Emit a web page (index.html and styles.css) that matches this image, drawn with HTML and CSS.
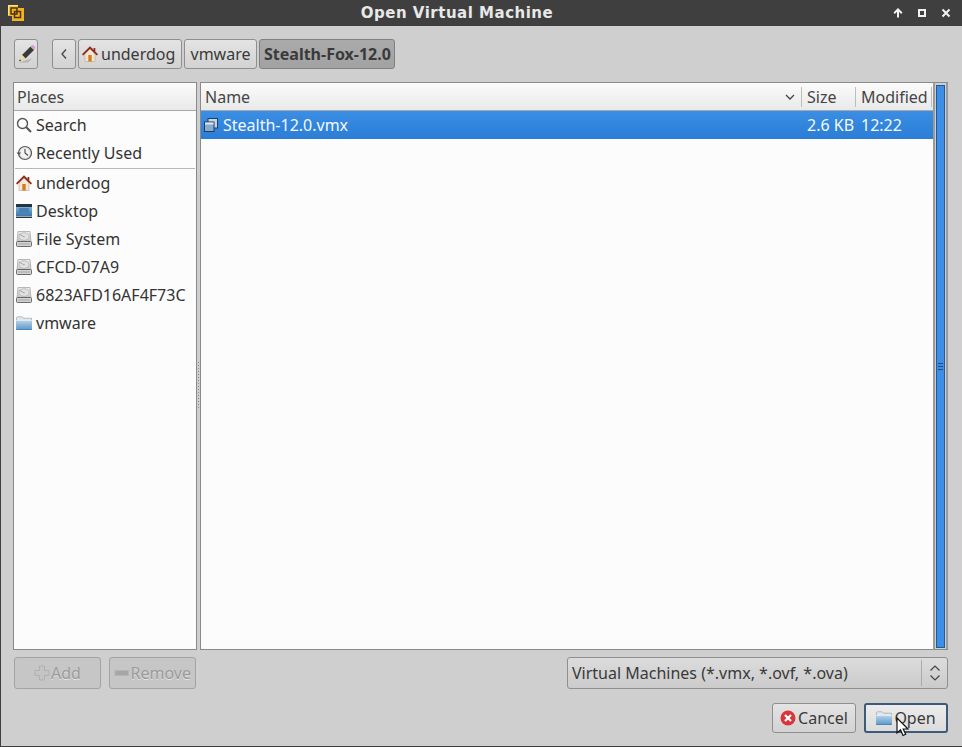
FILE: index.html
```html
<!DOCTYPE html>
<html lang="en">
<head>
<meta charset="utf-8">
<title>Open Virtual Machine</title>
<link rel="stylesheet" href="styles.css">
</head>
<body>
<svg class="defs" width="0" height="0" aria-hidden="true">
  <defs>
    <linearGradient id="gdisk" x1="0" y1="0" x2="0" y2="1"><stop offset="0" stop-color="#eeeeee"/><stop offset="1" stop-color="#c4c4c4"/></linearGradient>
    <linearGradient id="gfold" x1="0" y1="0" x2="0" y2="1"><stop offset="0" stop-color="#b5d3ea"/><stop offset="1" stop-color="#5a95c8"/></linearGradient>
    <linearGradient id="gdesk" x1="0" y1="0" x2="0" y2="1"><stop offset="0" stop-color="#7fb0d8"/><stop offset="1" stop-color="#3d74a8"/></linearGradient>
    <symbol id="home" viewBox="0 0 16 16">
      <path d="M3 8v7.500h10V8L8 3z" fill="#f4e7d3" stroke="#b9a78e" stroke-width=".6"/>
      <rect x="6.300" y="9" width="3.400" height="6.500" fill="#d9791f"/>
      <path d="M.6 8.800 8 1.500l7.400 7.300" fill="none" stroke="#8c2a1c" stroke-width="1.800"/>
      <rect x="11.500" y="2" width="1.800" height="3.500" fill="#8c2a1c"/>
    </symbol>
    <symbol id="disk" viewBox="0 0 16 16">
      <path d="M2 .5h12l1 10.500H1z" fill="url(#gdisk)" stroke="#a8a8a8" stroke-width=".8"/>
      <rect x=".5" y="10.500" width="15" height="5" rx="1" fill="#d4d4d4" stroke="#5c5c5c" stroke-width=".9"/>
      <ellipse cx="8" cy="5.600" rx="5" ry="3.800" fill="#e2e2e2" stroke="#b2b2b2" stroke-width=".8"/>
      <ellipse cx="8" cy="5.600" rx="1.200" ry=".9" fill="#bcbcbc"/>
      <path d="M3 3 7.500 5.600" stroke="#9a9a9a" stroke-width=".8"/>
      <rect x="2" y="12.500" width="12" height="1" fill="#a4a4a4"/>
    </symbol>
    <symbol id="folder" viewBox="0 0 16 16">
      <path d="M.5 14.500V2.500l.8-.7h4.800l1.200 1.400h8.200v11.300z" fill="#e3e7ea" stroke="#9aa4ae" stroke-width=".7"/>
      <path d="M.2 5.500h15.600v9.500H.2z" fill="url(#gfold)"/>
      <path d="M.2 5h15.600v.8H.2z" fill="#e6eef5"/>
      <path d="M.2 14.400h15.600v.6H.2z" fill="#3f78ad"/>
    </symbol>
  </defs>
</svg>
<div class="window">
  <header class="titlebar">
    <svg class="app-icon" viewBox="0 0 16 16" width="16" height="16">
      <path d="M0 0h10v3h6v13H4v-5H0z" fill="#f7b21c"/>
      <path d="M0 0h10v1.200H1.200V10H0z" fill="#ffe38a"/>
      <rect x="3" y="3" width="6" height="6" fill="#f7b21c" stroke="#4a3410" stroke-width="1.500"/>
      <rect x="6.500" y="6.500" width="6" height="6" fill="none" stroke="#4a3410" stroke-width="1.500"/>
    </svg>
    <h1 class="title">Open Virtual Machine</h1>
    <div class="wm-buttons">
      <svg viewBox="0 0 10 10" width="10" height="10"><path d="M5 9.500V2M1.200 5.200 5 1.400l3.800 3.800" fill="none" stroke="#f2f2f2" stroke-width="2"/></svg>
      <svg viewBox="0 0 10 10" width="10" height="10"><rect x="2" y="2" width="6" height="6" fill="none" stroke="#f2f2f2" stroke-width="2"/></svg>
      <svg viewBox="0 0 10 10" width="10" height="10"><path d="M1.500 1.500l7 7M8.500 1.500l-7 7" fill="none" stroke="#f2f2f2" stroke-width="2"/></svg>
    </div>
  </header>

  <div class="content">
    <nav class="pathbar">
      <button class="btn btn-edit" type="button">
        <svg viewBox="0 0 20 20" width="20" height="20">
          <path d="M3 18.500l13-4-4 4z" fill="#a8a8a8" opacity=".75"/>
          <path d="M6 11 14.500 2.500l3.500 3.500L9.500 14.500z" fill="#3a3a3a"/>
          <path d="M14.500 2.500l1-1c.8-.6 1.600-.6 2.300.1l.9.900c.7.700.7 1.500.1 2.300l-.8 1.200z" fill="#dc9bd0"/>
          <path d="M6 11l3.500 3.500-6.500 3z" fill="#f0dc9a"/>
          <path d="M4 15.300l-1 2.200 2.200-1z" fill="#333"/>
        </svg>
      </button>
      <div class="crumbs">
        <button class="btn btn-back" type="button">
          <svg viewBox="0 0 8 12" width="8" height="12"><path d="M6 1.500 2 6l4 4.500" fill="none" stroke="#444" stroke-width="1.300"/></svg>
        </button>
        <button class="btn crumb" type="button"><svg class="ico" width="16" height="16"><use href="#home"/></svg>underdog</button>
        <button class="btn crumb" type="button">vmware</button>
        <button class="btn crumb crumb-active" type="button">Stealth-Fox-12.0</button>
      </div>
    </nav>

    <main class="panes">
      <aside class="places">
        <div class="col-head places-head">Places</div>
        <ul class="place-list">
          <li class="place">
            <svg class="ico" viewBox="0 0 16 16" width="16" height="16"><circle cx="6.500" cy="6.500" r="5" fill="#fff" stroke="#555" stroke-width="1.400"/><path d="M10.300 10.300l4.700 4.700" stroke="#555" stroke-width="2"/></svg>Search
          </li>
          <li class="place">
            <svg class="ico" viewBox="0 0 16 16" width="16" height="16"><circle cx="9" cy="8" r="6.500" fill="#e4e4e4" stroke="#5a5a5a" stroke-width="1.200"/><circle cx="9" cy="8" r="4.500" fill="#f4f4f4"/><path d="M9 4v4l3 2.500" fill="none" stroke="#444" stroke-width="1.100"/><path d="M.5 7.500l2.300 2.800L5.200 7.500z" fill="#555"/></svg>Recently Used
          </li>
          <li class="place-sep" role="separator"></li>
          <li class="place"><svg class="ico" width="16" height="16"><use href="#home"/></svg>underdog</li>
          <li class="place">
            <svg class="ico" viewBox="0 0 16 16" width="16" height="16"><rect x="0" y="1" width="16" height="14" rx=".5" fill="#26323d"/><rect x="0" y="4" width="16" height="9" fill="url(#gdesk)"/><rect x="3" y="5" width="10" height="7.500" fill="#4b82b5"/><rect x="0" y="13" width="16" height="1" fill="#9aa8b4"/></svg>Desktop
          </li>
          <li class="place"><svg class="ico" width="16" height="16"><use href="#disk"/></svg>File System</li>
          <li class="place"><svg class="ico" width="16" height="16"><use href="#disk"/></svg>CFCD-07A9</li>
          <li class="place"><svg class="ico" width="16" height="16"><use href="#disk"/></svg>6823AFD16AF4F73C</li>
          <li class="place"><svg class="ico" width="16" height="16"><use href="#folder"/></svg>vmware</li>
        </ul>
      </aside>
      <div class="grip"></div>
      <section class="files">
        <div class="file-area">
          <div class="file-head">
            <div class="col-head col-name">Name
              <svg viewBox="0 0 10 6" width="10" height="6"><path d="M1 1l4 4 4-4" fill="none" stroke="#444" stroke-width="1.300"/></svg>
            </div>
            <div class="col-head col-size">Size</div>
            <div class="col-head col-mod">Modified</div>
          </div>
          <div class="file-row">
            <div class="cell-name">
              <svg class="ico" viewBox="0 0 16 16" width="16" height="16"><rect x="5" y="1.500" width="9.500" height="9.500" fill="#c3d6e8" stroke="#1f3f62"/><rect x="1.500" y="5" width="9.500" height="9.500" fill="#86abcf" stroke="#1f3f62"/><rect x="2" y="5.500" width="8.500" height="2" fill="#dce8f3"/></svg>
              Stealth-12.0.vmx
            </div>
            <div class="cell-size">2.6 KB</div>
            <div class="cell-mod">12:22</div>
          </div>
        </div>
        <div class="scrollbar"><div class="thumb"><span></span><span></span><span></span></div></div>
      </section>
    </main>

    <div class="filter-row">
      <div class="side-buttons">
        <button class="btn side-btn" type="button" disabled>
          <svg viewBox="0 0 16 16" width="16" height="16"><path d="M5.500 1h5v4.500H15v5h-4.500V15h-5v-4.500H1v-5h4.500z" fill="#c4c4c4" stroke="#b0b0b0"/></svg>Add
        </button>
        <button class="btn side-btn" type="button" disabled>
          <svg viewBox="0 0 16 16" width="16" height="16"><rect x="1" y="5.500" width="14" height="5" fill="#a9a5a5" stroke="#b5b5b5"/></svg>Remove
        </button>
      </div>
      <div class="btn combo">
        <span class="combo-text">Virtual Machines (*.vmx, *.ovf, *.ova)</span>
        <span class="combo-arrows">
          <svg viewBox="0 0 12 18" width="12" height="18"><path d="M1.500 6.500 6 2l4.500 4.500M1.500 11.500 6 16l4.500-4.500" fill="none" stroke="#444" stroke-width="1.200"/></svg>
        </span>
      </div>
    </div>

    <div class="actions">
      <button class="btn act" type="button">
        <svg viewBox="0 0 16 16" width="16" height="16"><circle cx="8" cy="8" r="7.500" fill="#d8363a"/><path d="M5 5l6 6M11 5l-6 6" stroke="#fff" stroke-width="2.200"/></svg>Cancel
      </button>
      <button class="btn act act-focus" type="button">
        <svg width="16" height="16"><use href="#folder"/></svg>Open
        <svg class="cursor" viewBox="0 0 14 20" width="14" height="20"><path d="M1 1v15l3.500-3.200L7 18.500l2.700-1.200-2.500-5.300H12z" fill="#fff" stroke="#111" stroke-width="1.200"/></svg>
      </button>
    </div>
  </div>
</div>
</body>
</html>
```

FILE: styles.css
```css
* { box-sizing: border-box; }
html, body { margin: 0; padding: 0; }
body {
  width: 962px;
  height: 747px;
  overflow: hidden;
  font-family: "Noto Sans", sans-serif;
  font-size: 16px;
  color: #333;
}
.defs { position: absolute; }
.window {
  width: 962px;
  height: 747px;
  display: flex;
  flex-direction: column;
  background: #cfcfcf;
  border-left: 1px solid #3f3f3f;
  border-bottom: 1px solid #3f3f3f;
}
.titlebar {
  height: 26px;
  margin-left: -1px;
  padding-right: 48px;
  flex: none;
  position: relative;
  display: flex;
  align-items: center;
  justify-content: center;
  background: #3f3f3f;
}
.app-icon { position: absolute; left: 8px; top: 5px; }
.title {
  margin: 0;
  font-family: "DejaVu Sans", sans-serif;
  font-size: 15px;
  font-weight: 700;
  letter-spacing: .5px;
  color: #e8e8e8;
}
.wm-buttons {
  position: absolute;
  right: 11px;
  top: 8px;
  display: flex;
  gap: 14px;
}
.wm-buttons svg { display: block; }
.content {
  flex: 1;
  display: flex;
  flex-direction: column;
  padding: 13px 14px 13px 12px;
  min-height: 0;
}
.btn {
  display: flex;
  align-items: center;
  height: 30px;
  padding: 0 4px;
  font: inherit;
  color: #3a3a3a;
  background: linear-gradient(#e4e4e4, #d2d2d2);
  border: 1px solid #8f8f8f;
  border-radius: 3px;
  white-space: nowrap;
}
.pathbar { display: flex; height: 30px; flex: none; margin-left: 1px; }
.btn-edit { width: 24px; padding: 0; justify-content: center; }
.crumbs { display: flex; gap: 2px; margin-left: 14px; }
.crumbs .btn { padding: 0 1px; }
.btn-back { width: 24px; justify-content: center; }
.crumb { padding: 0 4px !important; gap: 2px; }
.crumb:nth-child(2) { width: 104px; padding-left: 3px !important; gap: 3px; }
.crumb:nth-child(3) { width: 73px; justify-content: center; }
.crumb-active {
  width: 136px;
  font-weight: 700;
  background: linear-gradient(#aaa, #a2a2a2);
  border-color: #808080;
}
.panes {
  height: 568px;
  flex: none;
  margin-top: 13px;
  display: flex;
}
.places {
  width: 184px;
  flex: none;
  background: #fcfcfc;
  border: 1px solid #8a8a8a;
  display: flex;
  flex-direction: column;
}
.col-head {
  height: 27px;
  display: flex;
  align-items: center;
  padding: 0 3px;
  color: #454545;
  background: linear-gradient(#fbfbfb, #e9e9e9);
}
.places-head { border-bottom: 1px solid #a8a8a8; padding-left: 3px; flex: none; height: 28px; }
.place-list { list-style: none; margin: 0; padding: 0; }
.place {
  height: 28px;
  display: flex;
  align-items: center;
  padding-left: 2px;
  gap: 4px;
  color: #333;
}
.place-sep { height: 1px; margin: 1px 1px 0; background: #b8b8b8; }
.ico { flex: none; }
.grip {
  width: 3px;
  flex: none;
  background:
    repeating-linear-gradient(#8a8a8a 0 1px, transparent 1px 3px) 1px 280px / 1px 48px no-repeat,
    #cfcfcf;
}
.files {
  flex: 1;
  display: flex;
  background: #fcfcfc;
  border: 1px solid #8a8a8a;
  border-right: 0;
  min-width: 0;
}
.file-area { flex: 1; min-width: 0; }
.file-head { display: flex; height: 28px; border-bottom: 1px solid #a8a8a8; }
.file-head .col-head { height: 27px; position: relative; padding-left: 4px; }
.col-name { flex: 1; justify-content: space-between; padding-right: 6px !important; }
.col-size { width: 54px; padding-left: 6px !important; }
.col-mod { width: 78px; padding-left: 6px !important; }
.col-size::before, .col-mod::before, .col-mod::after {
  content: "";
  position: absolute;
  left: 0;
  top: 4px;
  bottom: 3px;
  width: 1px;
  background: #bdbdbd;
}
.col-mod::after { left: auto; right: 1px; }
.file-row {
  height: 28px;
  display: flex;
  align-items: center;
  color: #f4f8fc;
  background: linear-gradient(#3a8ee3, #2b7dd6);
}
.cell-name { flex: 1; display: flex; align-items: center; gap: 4px; padding-left: 2px; }
.cell-size { width: 54px; padding-left: 6px; }
.cell-mod { width: 78px; padding-left: 6px; }
.scrollbar {
  width: 15px;
  flex: none;
  background: #cfcfcf;
  border-left: 2px solid #9a9a9a;
  margin: -1px 0;
  padding: 2px 3px 1px 1px;
  border-top: 1px solid #8a8a8a;
  border-bottom: 1px solid #8a8a8a;
  box-shadow: inset -2px 0 #9a9a9a;
}
.thumb {
  height: 100%;
  background: #3d8ee6;
  border: 1px solid #1f5a96;
  display: flex;
  flex-direction: column;
  align-items: center;
  justify-content: center;
  gap: 2px;
}
.thumb span { width: 5px; height: 1px; background: #234d78; }
.filter-row {
  margin-top: 7px;
  height: 32px;
  flex: none;
  display: flex;
  justify-content: space-between;
}
.side-buttons { display: flex; gap: 8px; margin-left: 1px; }
.side-btn {
  width: 87px;
  height: 32px;
  justify-content: center;
  gap: 1px;
  color: #9b9b9b;
  background: #c6c6c6;
  border-color: #a3a3a3;
  text-shadow: 0 1px 0 #e4e4e4;
}
.combo {
  width: 381px;
  height: 32px;
  padding: 0 0 0 4px;
  background: linear-gradient(#dcdcdc, #cbcbcb);
  justify-content: space-between;
}
.combo-arrows {
  width: 26px;
  height: 26px;
  display: flex;
  align-items: center;
  justify-content: center;
  border-left: 1px solid #aaa;
}
.actions {
  margin-top: 14px;
  height: 30px;
  flex: none;
  display: flex;
  justify-content: flex-end;
  gap: 8px;
}
.act { width: 84px; justify-content: center; gap: 2px; position: relative; }
.act-focus {
  border: 2px solid #3d5a78;
  background: linear-gradient(#ececec, #dcdcdc);
}
.cursor { position: absolute; left: 30px; top: 12px; }
```
